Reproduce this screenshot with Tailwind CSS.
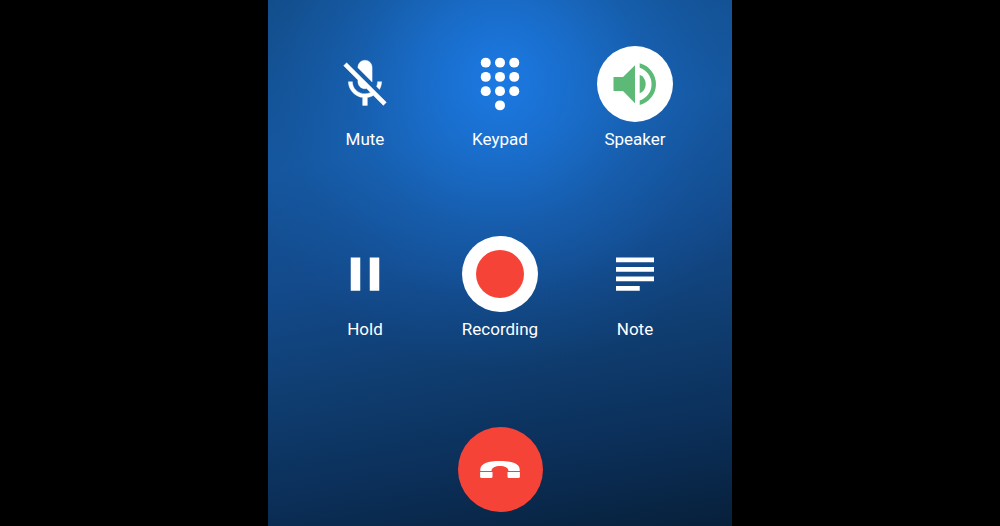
<!DOCTYPE html>
<html lang="en">
<head>
    <meta charset="UTF-8">
    <meta name="viewport" content="width=device-width, initial-scale=1.0">
    <title>Call</title>
    <script src="https://cdn.jsdelivr.net/npm/@tailwindcss/browser@4"></script>
</head>
<body class="bg-black min-h-screen flex justify-center font-['Roboto',sans-serif] text-white">
    <main class="w-full max-w-[464px] min-h-screen px-7 pt-[46px] pb-3 flex flex-col items-center bg-[radial-gradient(ellipse_280px_290px_at_50%_80px,rgb(28_122_228)_0%,rgb(27_118_220/0.75)_26%,rgb(26_112_208/0.42)_52%,rgb(24_104_196/0.15)_78%,rgb(24_100_190/0)_100%),linear-gradient(170deg,#124b86_0%,#15559b_28%,#134a8b_48%,#0f3d70_66%,#0b2e57_84%,#07203a_100%)]">
        <div class="w-full max-w-[405px] grid grid-cols-3 gap-y-[85px]">
            <button type="button" class="flex flex-col items-center gap-[5px] cursor-pointer">
                <span class="size-[76px] rounded-full flex items-center justify-center">
                    <svg class="size-[76px]" viewBox="-4 -4 32 32" fill="currentColor" aria-hidden="true">
                        <path d="M19 11h-1.7c0 .74-.16 1.43-.43 2.05l1.23 1.23c.56-.98.9-2.09.9-3.28zm-4.02.17c0-.06.02-.11.02-.17V5c0-1.66-1.34-3-3-3S9 3.34 9 5v.18l5.98 5.99zM4.27 3L3 4.27l6.01 6.01V11c0 1.66 1.33 3 2.99 3 .22 0 .44-.03.65-.08l1.66 1.66c-.71.33-1.5.52-2.31.52-2.76 0-5.3-2.1-5.3-5.1H5c0 3.41 2.72 6.23 6 6.72V21h2v-3.28c.91-.13 1.77-.45 2.54-.9L19.73 21 21 19.73 4.27 3z" stroke="currentColor" stroke-width=".15"/>
                    </svg>
                </span>
                <span class="text-[17px] leading-6">Mute</span>
            </button>

            <button type="button" class="flex flex-col items-center gap-[5px] cursor-pointer">
                <span class="size-[76px] rounded-full flex items-center justify-center">
                    <svg class="size-[76px]" viewBox="-4 -4 32 32" fill="currentColor" aria-hidden="true">
                        <circle cx="6" cy="3" r="2.1"/><circle cx="12" cy="3" r="2.1"/><circle cx="18" cy="3" r="2.1"/>
                        <circle cx="6" cy="9" r="2.1"/><circle cx="12" cy="9" r="2.1"/><circle cx="18" cy="9" r="2.1"/>
                        <circle cx="6" cy="15" r="2.1"/><circle cx="12" cy="15" r="2.1"/><circle cx="18" cy="15" r="2.1"/>
                        <circle cx="12" cy="21" r="2.1"/>
                    </svg>
                </span>
                <span class="text-[17px] leading-6">Keypad</span>
            </button>

            <button type="button" aria-pressed="true" class="flex flex-col items-center gap-[5px] cursor-pointer">
                <span class="size-[76px] rounded-full bg-white text-[#5dba76] flex items-center justify-center">
                    <svg class="size-[76px]" viewBox="0 0 76 76" fill="currentColor" aria-hidden="true">
                        <path d="M16.5 31H26L38 19.3V57.3L26 45H16.5z"/>
                        <path d="M42.7 28.7A10.2 10.2 0 0 1 42.7 47.3z"/>
                        <path d="M42.7 17.3A21.5 21.5 0 0 1 42.7 59V54.5A17.2 17.2 0 0 0 42.7 21.8z"/>
                    </svg>
                </span>
                <span class="text-[17px] leading-6">Speaker</span>
            </button>

            <button type="button" class="flex flex-col items-center gap-[5px] cursor-pointer">
                <span class="size-[76px] rounded-full flex items-center justify-center">
                    <svg class="size-[76px]" viewBox="-4 -4 32 32" fill="currentColor" aria-hidden="true">
                        <path d="M6 19h4V5H6v14zm8-14v14h4V5h-4z"/>
                    </svg>
                </span>
                <span class="text-[17px] leading-6">Hold</span>
            </button>

            <button type="button" aria-pressed="true" class="flex flex-col items-center gap-[5px] cursor-pointer">
                <span class="size-[76px] rounded-full bg-white flex items-center justify-center">
                    <span class="size-12 rounded-full bg-[#f54437]"></span>
                </span>
                <span class="text-[17px] leading-6">Recording</span>
            </button>

            <button type="button" class="flex flex-col items-center gap-[5px] cursor-pointer">
                <span class="size-[76px] rounded-full flex items-center justify-center">
                    <svg class="size-[76px]" viewBox="-4 -4 32 32" fill="currentColor" aria-hidden="true">
                        <path d="M14 17H4v2h10v-2zm6-8H4v2h16V9zM4 15h16v-2H4v2zM4 5v2h16V5H4z"/>
                    </svg>
                </span>
                <span class="text-[17px] leading-6">Note</span>
            </button>
        </div>

        <button type="button" aria-label="End call" class="mt-[86px] size-[85px] rounded-full bg-[#f54437] flex items-center justify-center cursor-pointer">
            <svg class="size-[85px]" viewBox="0 0 85 85" fill="currentColor" aria-hidden="true">
                <path d="M22.3 44V42.5C22.3 36.5 30 34 42 34S61.7 36.5 61.7 42.5V44H50.5C50.5 40.5 46.5 39 42 39S33.5 40.5 33.5 44z"/>
                <path d="M22.1 45H34.5V49.5Q34.5 51 33 51H23.6Q22.1 51 22.1 49.5z"/>
                <path d="M49.5 45H61.9V49.5Q61.9 51 60.4 51H51Q49.5 51 49.5 49.5z"/>
            </svg>
        </button>
    </main>
</body>
</html>
